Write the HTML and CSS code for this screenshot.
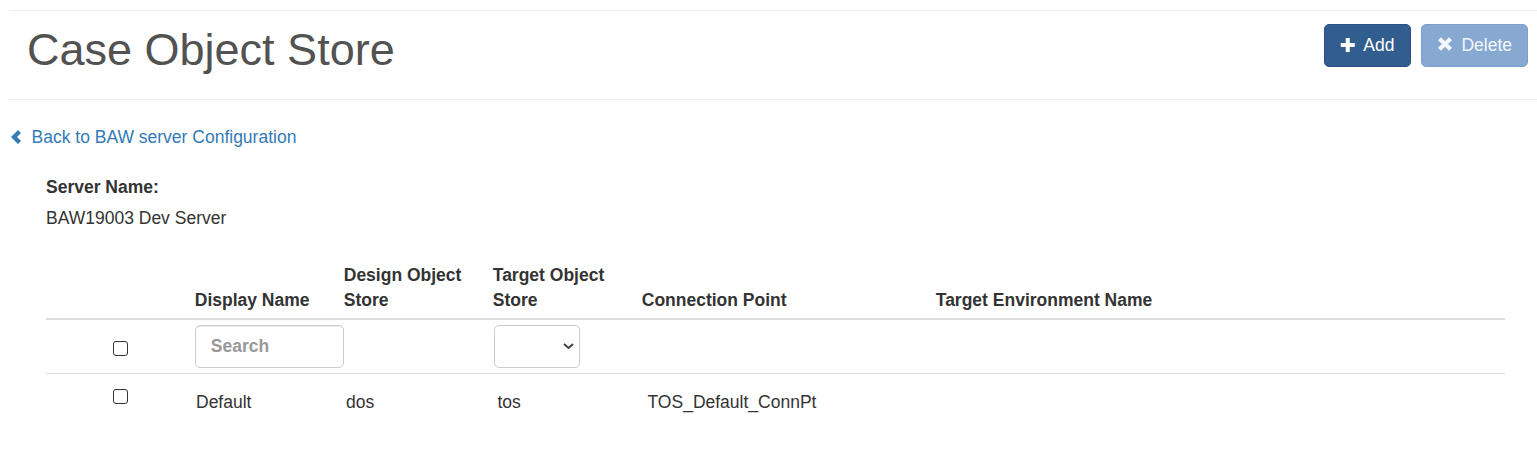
FILE: index.html
```html
<!DOCTYPE html>
<html lang="en">
<head>
<meta charset="utf-8">
<title>Case Object Store</title>
<link rel="stylesheet" href="styles.css">
</head>
<body>
<div class="page">
  <header class="page-header">
    <h1 class="title">Case Object Store</h1>
    <div class="actions">
      <button class="btn btn-primary" type="button">
        <svg class="ico-plus" viewBox="0 0 15 14" width="15.5" height="14" aria-hidden="true"><rect x="5.5" y="0" width="4" height="14" fill="#fff"/><rect x="0.5" y="5" width="14" height="4" fill="#fff"/></svg>
        <span>Add</span>
      </button>
      <button class="btn btn-disabled" type="button" disabled>
        <svg class="ico-x" viewBox="0 0 16 14" width="16" height="14" aria-hidden="true"><path d="M4 0.2 L8 4.2 L12 0.2 L15 3.2 L11 7 L15 10.8 L12 13.8 L8 9.8 L4 13.8 L1 10.8 L5 7 L1 3.2 Z" fill="#f4f7fb"/></svg>
        <span>Delete</span>
      </button>
    </div>
  </header>

  <div class="back-row">
    <a class="back" href="#">
      <svg class="ico-chev" viewBox="0 0 11 14" width="11" height="14" aria-hidden="true"><polygon points="0,7 7,0 10,3 6,7 10,11 7,14" fill="#337ab7"/></svg>
      <span>Back to BAW server Configuration</span>
    </a>
  </div>

  <section class="server">
    <div class="server-label">Server Name:</div>
    <div class="server-value">BAW19003 Dev Server</div>
  </section>

  <div class="grid-table">
    <div class="row head">
      <div class="cell"></div>
      <div class="cell">Display Name</div>
      <div class="cell">Design Object Store</div>
      <div class="cell">Target Object Store</div>
      <div class="cell">Connection Point</div>
      <div class="cell">Target Environment Name</div>
    </div>
    <div class="row filter">
      <div class="cell cb-cell"><input type="checkbox" class="cb"></div>
      <div class="cell"><input class="search" type="text" placeholder="Search"></div>
      <div class="cell"></div>
      <div class="cell"><div class="select"><svg viewBox="0 0 11 6" width="11" height="6" aria-hidden="true"><polyline points="1,1 5.5,5 10,1" fill="none" stroke="#444" stroke-width="2"/></svg></div></div>
      <div class="cell"></div>
      <div class="cell"></div>
    </div>
    <div class="row data">
      <div class="cell cb-cell"><input type="checkbox" class="cb"></div>
      <div class="cell">Default</div>
      <div class="cell">dos</div>
      <div class="cell">tos</div>
      <div class="cell">TOS_Default_ConnPt</div>
      <div class="cell"></div>
    </div>
  </div>
</div>
</body>
</html>
```

FILE: styles.css
```css
* { box-sizing: border-box; }
html, body { margin: 0; padding: 0; background: #fff; }
body {
  font-family: "Liberation Sans", Arial, sans-serif;
  font-size: 17.5px;
  line-height: 25px;
  color: #333;
}

.page-header {
  margin: 10px 0 0 9px;
  height: 90px;
  border-top: 1px solid #eee;
  border-bottom: 1px solid #eee;
  display: flex;
  justify-content: space-between;
  align-items: flex-start;
}
.title {
  margin: 13.5px 0 0;
  padding-left: 18px;
  font-size: 45px;
  line-height: 1.1;
  font-weight: normal;
  color: #525252;
}
.actions {
  margin-top: 13px;
  padding-right: 9px;
  display: flex;
  gap: 10px;
}
.btn {
  display: inline-flex;
  align-items: center;
  gap: 8px;
  height: 42.5px;
  padding: 0 15px;
  border: 1px solid transparent;
  border-radius: 5px;
  font-family: inherit;
  font-size: 17.5px;
  line-height: 25px;
  cursor: pointer;
}
.btn-primary {
  background: #325e8f;
  border-color: #2b5282;
  color: #fff;
  padding-right: 16px;
}
.btn-disabled {
  background: #87a8d0;
  border-color: #7f9fc8;
  color: #f4f7fb;
  cursor: not-allowed;
}
.ico-plus { margin-top: -1px; }
.ico-x { margin-top: -3px; }

.back-row {
  margin-top: 24.5px;
  padding-left: 11px;
  display: flex;
}
.back {
  display: inline-flex;
  align-items: center;
  gap: 9.5px;
  color: #337ab7;
  text-decoration: none;
}

.server {
  margin-top: 25px;
  padding-left: 46px;
}
.server-label {
  font-weight: bold;
  margin-bottom: 6px;
}

.grid-table {
  margin: 24.5px 32px 0 46px;
}
.row {
  display: grid;
  grid-template-columns: 142.5px 149px 149px 149px 294px 1fr;
}
.cell { padding: 6.25px; }
.head {
  align-items: end;
  font-weight: bold;
  border-bottom: 2.5px solid #ddd;
}
.head .cell { padding: 8px 6.25px 4.5px; }
.filter {
  align-items: center;
  border-bottom: 1.25px solid #ddd;
}
.filter .cell { padding: 5.5px 6.25px 5px; }
.filter .cb-cell { padding-top: 10px; padding-left: 67.3px; }
.cb-cell { padding-left: 67.3px; }
.cb {
  -webkit-appearance: none;
  appearance: none;
  display: block;
  width: 15px;
  height: 15px;
  margin: 0;
  border: 1px solid #333;
  border-radius: 3px;
  background: #fff;
}
.search {
  display: block;
  width: 149.5px;
  height: 42.5px;
  padding: 7.5px 15px;
  border: 1px solid #ccc;
  border-radius: 5px;
  box-shadow: inset 0 1px 1px rgba(0,0,0,.075);
  font-family: inherit;
  font-size: 17.5px;
  font-weight: bold;
  color: #555;
}
.search::placeholder { color: #999; }
.select {
  width: 86px;
  height: 42.5px;
  margin-left: 1px;
  border: 1px solid #ccc;
  border-radius: 5px;
  display: flex;
  align-items: center;
  justify-content: flex-end;
  padding: 0 5px 0 0;
}

.data { align-items: start; }
.data .cell { padding-top: 16px; padding-bottom: 6.25px; }
.data .cb-cell { padding-top: 15px; padding-left: 67.3px; }
.data .cell:nth-child(2) { padding-left: 7.5px; }
.data .cell:nth-child(3) { padding-left: 8.5px; }
.data .cell:nth-child(4) { padding-left: 11px; }
.data .cell:nth-child(5) { padding-left: 12px; }
```
